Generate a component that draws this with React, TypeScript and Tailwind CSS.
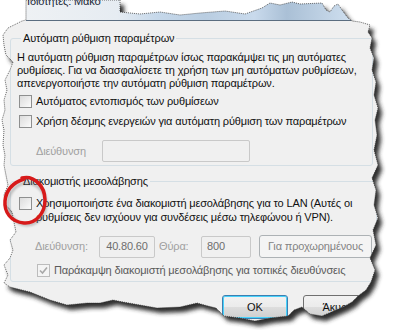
import React from "react";

const paper =
  "M26 0 L120 0 L120 12 L140 14 L160 12 L180 15 L200 13 L225 11 L245 14 L262 8 L270 3 L280 5 L292 2 L300 4 L322 3 L326 10 L330 12 L334 6 L338 4 L342 10 L348 18 L352 21 L360 22 L370 25 L368 32 L372 38 L370 48 L374 58 L372 70 L376 82 L374 95 L378 108 L375 120 L377 135 L374 150 L378 165 L372 178 L376 190 L374 205 L378 218 L373 230 L376 245 L370 258 L375 270 L371 282 L366 290 L358 296 L352 302 L345 306 L336 310 L322 316 L310 314 L302 307 L294 310 L288 316 L270 318 L255 321 L240 318 L224 316 L216 308 L208 306 L197 303 L180 307 L157 308 L140 305 L123 302 L113 300 L100 303 L87 303 L67 305 L50 300 L30 292 L10 287 L4 283 L8 275 L4 265 L10 258 L13 250 L10 240 L16 232 L14 222 L12 212 L6 205 L4 195 L8 185 L6 175 L4 165 L5 155 L3 145 L4 130 L2 120 L5 110 L4 100 L7 90 L5 80 L10 70 L13 62 L6 55 L4 45 L3 35 L8 28 L16 24 L22 21 L26 20 Z";

function Check({ checked, disabled }: { checked?: boolean; disabled?: boolean }) {
  return (
    <span
      className={
        "flex h-[13px] w-[13px] shrink-0 items-center justify-center border " +
        (disabled
          ? "border-[#bcbcbc] bg-[#f4f4f4]"
          : "border-[#8e8f8f] bg-[linear-gradient(135deg,#dcdcdc,#fbfbfb)]")
      }
    >
      {checked && (
        <svg width="9" height="9" viewBox="0 0 9 9">
          <path d="M1 4.5 L3.5 7 L8 1.5" fill="none" stroke="#a8a8a8" strokeWidth="1.6" />
        </svg>
      )}
    </span>
  );
}

export default function App() {
  return (
    <div
      className="relative h-[330px] w-[396px] overflow-hidden whitespace-nowrap bg-white text-[11px] leading-[13px] tracking-[-0.15px] text-[#111]"
      style={{ fontFamily: "'Liberation Sans', Arial, sans-serif" }}
    >
      {/* title strip */}
      <div className="ml-[26px] h-[21px] w-[326px] overflow-hidden border-b border-[#5b6d80] bg-[linear-gradient(90deg,#eef1f4_0%,#e6ecf2_28%,#c6d8ea_40%,#b9cde1_55%,#c9daec_70%,#aac0d6_80%,#cfdfef_100%)]">
        <div className="-mt-[5px] pl-[1px] text-[11px] text-[#1b2a3a]">Ιδιότητες: Μακσ</div>
      </div>

      {/* body */}
      <div className="h-[309px] bg-[#f0f0f0] pl-[10px] pr-[23px] pt-[11px]">
        <fieldset className="rounded-[3px] border border-[#d5dfe5] pb-[3px] pl-[6px] pr-[4px]">
          <legend className="ml-[4px] px-[2px]">Αυτόματη ρύθμιση παραμέτρων</legend>
          <p className="mt-[6px]">
            Η αυτόματη ρύθμιση παραμέτρων ίσως παρακάμψει τις μη αυτόματες
            <br />
            ρυθμίσεις. Για να διασφαλίσετε τη χρήση των μη αυτόματων ρυθμίσεων,
            <br />
            απενεργοποιήστε την αυτόματη ρύθμιση παραμέτρων.
          </p>
          <label className="mt-[5px] ml-[2px] flex items-center gap-[4px]">
            <Check />
            <span>Αυτόματος εντοπισμός των ρυθμίσεων</span>
          </label>
          <label className="mt-[7px] ml-[2px] flex items-center gap-[4px]">
            <Check />
            <span>Χρήση δέσμης ενεργειών για αυτόματη ρύθμιση των παραμέτρων</span>
          </label>
          <div className="mt-[12px] flex items-center">
            <span className="ml-[19px] w-[66px] text-[#a0a0a0]">Διεύθυνση</span>
            <div className="h-[22px] w-[148px] rounded-[2px] border border-[#c9c9c9] bg-[#f0f0f0]" />
          </div>
        </fieldset>

        <fieldset className="mt-[9px] rounded-[3px] border border-[#d5dfe5] pb-[4px] pl-[6px] pr-[4px]">
          <legend className="ml-[4px] px-[2px]">Διακομιστής μεσολάβησης</legend>
          <label className="mt-[8px] ml-[2px] flex items-start gap-[4px]">
            <span className="pt-[1px]">
              <Check />
            </span>
            <span className="leading-[14px]">
              Χρησιμοποιήστε ένα διακομιστή μεσολάβησης για το LAN (Αυτές οι
              <br />
              ρυθμίσεις δεν ισχύουν για συνδέσεις μέσω τηλεφώνου ή VPN).
            </span>
          </label>
          <div className="mt-[11px] flex items-center">
            <span className="ml-[18px] w-[64px] text-[#a0a0a0]">Διεύθυνση:</span>
            <div className="flex h-[22px] w-[56px] items-center justify-center rounded-[2px] border border-[#c9c9c9] text-[#6d6d6d]">
              40.80.60
            </div>
            <span className="ml-[4px] w-[42px] text-[#a0a0a0]">Θύρα:</span>
            <div className="flex h-[22px] w-[50px] items-center rounded-[2px] border border-[#c9c9c9] pl-[5px] text-[#6d6d6d]">
              800
            </div>
            <div className="ml-[8px] flex h-[23px] w-[113px] items-center justify-center rounded-[3px] border border-[#adb2b5] bg-[#f4f4f4] text-[#838383]">
              Για προχωρημένους
            </div>
          </div>
          <label className="mt-[6px] ml-[20px] flex items-center gap-[4px] text-[#5a5a5a]">
            <Check checked disabled />
            <span>Παράκαμψη διακομιστή μεσολάβησης για τοπικές διευθύνσεις</span>
          </label>
        </fieldset>

        <div className="mt-[13px] flex gap-[15px] pl-[212px]">
          <div className="flex h-[24px] w-[70px] items-center justify-center rounded-[3px] border border-[#3c7fb1] bg-[linear-gradient(#f2f2f2,#ebebeb_50%,#dddddd_51%,#cfcfcf)] shadow-[inset_0_0_0_1px_#48d2fb]">
            OK
          </div>
          <div className="flex h-[24px] w-[75px] items-center justify-center rounded-[3px] border border-[#707070] bg-[linear-gradient(#f2f2f2,#ebebeb_50%,#dddddd_51%,#cfcfcf)]">
            Άκυρο
          </div>
        </div>
      </div>

      {/* torn paper edge, shadow and annotation */}
      <svg className="pointer-events-none absolute left-0 top-0" width="396" height="330" viewBox="0 0 396 330">
        <defs>
          <clipPath id="outside">
            <path d={"M0 0 H396 V330 H0 Z " + paper} clipRule="evenodd" />
          </clipPath>
          <filter id="blur" x="-10%" y="-10%" width="120%" height="120%">
            <feGaussianBlur stdDeviation="2" />
          </filter>
          <filter id="soft" x="-20%" y="-20%" width="140%" height="140%">
            <feGaussianBlur stdDeviation="0.8" />
          </filter>
        </defs>
        <path d={"M0 0 H396 V330 H0 Z " + paper} fill="#ffffff" fillRule="evenodd" />
        <g clipPath="url(#outside)">
          <path d={paper} transform="translate(4 5)" fill="#2e2e2e" filter="url(#blur)" />
        </g>
        <path d={paper} fill="none" stroke="#2a2a2a" strokeWidth="0.7" strokeDasharray="1 1" />
        <ellipse cx="26" cy="202" rx="19" ry="21" fill="none" stroke="#777" strokeWidth="3" opacity="0.4" filter="url(#soft)" transform="translate(1 2)" />
        <path
          d="M22 178 C34 175 45 186 45 200 C45 214 35 224 24 223 C11 222 4 212 5 201 C6 190 12 183 24 179"
          fill="none"
          stroke="#d71a1a"
          strokeWidth="3.5"
          strokeLinecap="round"
        />
      </svg>
    </div>
  );
}
